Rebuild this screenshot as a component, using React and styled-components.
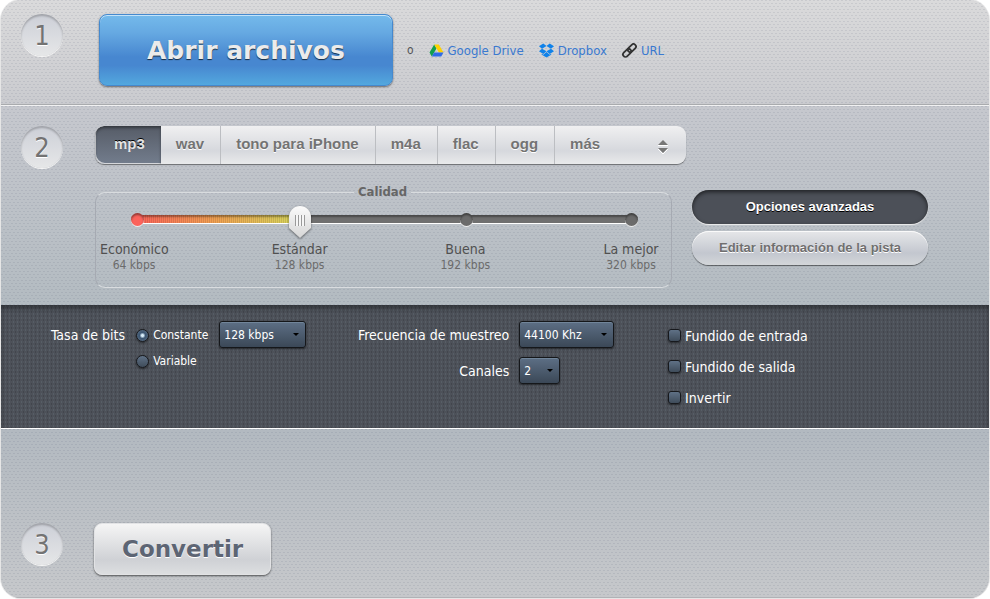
import { useState } from 'react';
import styled, { createGlobalStyle, css } from 'styled-components';

// Colors:
// ----------------------------------------------------------
// link blue: #3a79d0
// text gray: #6f6f6f
// dark panel: #4b5059
// button blue: #4787d0
// ----------------------------------------------------------

const sans = `"DejaVu Sans Condensed", "DejaVu Sans", sans-serif`;
const wide = `"DejaVu Sans", Verdana, sans-serif`;
const arial = `"Liberation Sans", Arial, sans-serif`;

const GlobalStyle = createGlobalStyle`
    * {
        box-sizing: border-box;
    }
    body {
        margin: 0;
        background: #fff;
        font-family: ${sans};
        font-size: 14px;
        color: #555;
    }
    button, input, select {
        font-family: inherit;
        margin: 0;
    }
    button, select {
        cursor: pointer;
    }
`

const Panel = styled.main`
    margin: 0 1px 1px;
    border-radius: 20px;
    overflow: hidden;
    box-shadow: 0 0 0 1px #e6e6e6;
`
// staggered 2px dashes over the metal gradient
const Section = styled.section`
    display: flex;
    align-items: flex-start;
    padding: ${p => p.$padding};
    background-color: ${p => p.$to};
    background-image:
        conic-gradient(from 270deg at 2px 1px, rgba(80, 90, 110, 0.12) 0 90deg, transparent 0),
        conic-gradient(from 270deg at 2px 1px, rgba(80, 90, 110, 0.12) 0 90deg, transparent 0),
        linear-gradient(to bottom, ${p => p.$from}, ${p => p.$to});
    background-size: 4px 6px, 4px 6px, 100% 100%;
    background-position: 0 0, 2px 3px, 0 0;
`
const OpenSection = styled(Section)`
    border-bottom: 1px solid #a9abae;
`
const FormatSection = styled(Section)`
    border-top: 1px solid #f1f1f2;
`
const ConvertSection = styled(Section)`
    border-top: 1px solid #fff;
    box-shadow: inset 0 -1px 0 #b0b2b6;
`
const StepNumber = styled.div`
    flex: none;
    width: 42px;
    height: 42px;
    border-radius: 50%;
    background: linear-gradient(#cccfd7, #e6e7e8);
    box-shadow: inset 0 2px 2px rgba(0, 0, 0, 0.22), 0 1px 0 #f4f4f4;
    color: #737373;
    font-size: 27px;
    line-height: 43px;
    text-align: center;
    text-shadow: 0 1px 0 #fff;
`

const OpenButton = styled.button`
    margin-left: 36px;
    padding: 0 47px;
    height: 72px;
    border: 1px solid #4589ce;
    border-radius: 8px;
    background: linear-gradient(#74baeb 0%, #66a9e2 25%, #4787d0 60%, #4787d0 72%, #53a8de 100%);
    box-shadow: inset 0 1px 0 #c4e3f8, 0 1px 2px rgba(0, 0, 0, 0.5);
    color: #ebebeb;
    font-family: ${wide};
    font-size: 25px;
    font-weight: bold;
    text-shadow: 0 1px 1px rgba(0, 0, 0, 0.7);
`
const Sources = styled.div`
    display: flex;
    align-items: center;
    align-self: center;
    gap: 15px;
    margin-left: 14px;
    font-size: 13px;
`
const SourceLink = styled.a`
    display: flex;
    align-items: center;
    gap: 4px;
    color: #3a79d0;
    text-decoration: none;
`
const Or = styled.span`
    font-size: 12px;
`

const FormatBody = styled.div`
    flex: 1;
    margin-left: 32px;
`
const Tabs = styled.div`
    display: inline-flex;
    height: 38px;
    border-radius: 9px;
    overflow: hidden;
    background: linear-gradient(#f0f0f1, #d6d8dd 65%, #e9eaeb);
    box-shadow: 0 1px 1px #6b6d70;
`
const tabText = css`
    border: 0;
    background: none;
    color: #737373;
    font-family: ${arial};
    font-size: 15px;
    font-weight: bold;
    line-height: 18px;
    text-shadow: 0 1px 0 #fff;
`
const Tab = styled.button`
    ${tabText}
    padding: 0 16px 3px 15px;
    border-right: 1px solid #bcbec2;
    ${p => p.$active && css`
        padding: 0 16px 3px 19px;
        border-right: 0;
        border-radius: 9px 0 0 9px;
        background: linear-gradient(#565c67, #737d8d);
        box-shadow: inset 0 2px 3px rgba(0, 0, 0, 0.4), inset 1px -1px 0 #d8dade;
        color: #e4e4e4;
        text-shadow: 0 -1px 0 #000;
    `}
`
const MoreWrap = styled.div`
    position: relative;
    width: 131px;

    svg {
        position: absolute;
        top: 13px;
        right: 17px;
        pointer-events: none;
    }
`
const MoreSelect = styled.select`
    ${tabText}
    width: 100%;
    height: 100%;
    padding: 0 15px 3px;
    appearance: none;
`

const QualityRow = styled.div`
    display: flex;
    align-items: flex-start;
    gap: 20px;
    margin-top: 20px;
`
const Quality = styled.fieldset`
    flex: none;
    width: 577px;
    margin: 0;
    padding: 5px 6px 14px 4px;
    border: 1px solid #a6aab2;
    border-top-color: #d9dcdf;
    border-bottom-color: #d9dcdf;
    border-radius: 10px;
`
const Legend = styled.legend`
    margin: 0 auto;
    padding: 0 4px;
    color: #666;
    font-size: 13px;
    font-weight: bold;
    line-height: 16px;
`
const Slider = styled.div`
    display: grid;
    align-items: center;
    width: 516px;
    height: 34px;
    margin-left: 26px;

    > * {
        grid-area: 1 / 1;
    }
`
const Rail = styled.div`
    display: flex;
    align-items: center;
    justify-content: space-between;
    height: 8px;
    margin: 0 4px 6px 5px;
    border-radius: 4px;
    box-shadow: inset 0 2px 2px rgba(0, 0, 0, 0.35), 0 1px 0 #fff;
`
const Stop = styled.span`
    width: 13px;
    height: 13px;
    border-radius: 50%;
    background: ${p => (p.$first ? '#fb635c' : '#6b6b6b')};
    box-shadow: inset 0 2px 2px rgba(0, 0, 0, 0.4), 0 1px 0 #eee;
`
const Range = styled.input`
    width: 100%;
    height: 34px;
    background: none;
    appearance: none;
    filter: drop-shadow(0 1px 1px rgba(0, 0, 0, 0.5));

    &::-webkit-slider-thumb {
        appearance: none;
        width: 22px;
        height: 32px;
        background:
            repeating-linear-gradient(90deg, #9a9a9a 0 1px, #f6f6f6 1px 3px) center 9px / 10px 11px no-repeat,
            linear-gradient(#fbfbfb, #d6d6d6);
        clip-path: path('M0 11 A11 11 0 0 1 22 11 V22 L11 32 L0 22 Z');
    }
`
const Levels = styled.div`
    display: flex;
    justify-content: space-between;
    margin-top: 2px;
`
const Level = styled.div`
    width: 68px;
    color: #505050;
    font-size: 14px;
    line-height: 16px;
    text-align: center;
    white-space: nowrap;

    small {
        display: block;
        color: #6b6b6b;
        font-size: 12px;
    }
`
const SideButtons = styled.div`
    display: flex;
    flex-direction: column;
    gap: 7px;
    width: 236px;
    margin-top: 6px;
`
const PillButton = styled.button`
    height: 34px;
    padding-bottom: 2px;
    border: 0;
    border-radius: 17px;
    background: linear-gradient(#e6e7e9, #c3c7cf 65%, #d3d6d9);
    box-shadow: inset 0 1px 0 #fafafa, 0 1px 1px rgba(0, 0, 0, 0.5);
    color: #6f6f6f;
    font-family: ${arial};
    font-size: 13px;
    font-weight: bold;
    text-shadow: 0 1px 0 #fff;
    ${p => p.$active && css`
        background: #4c5058;
        box-shadow: inset 0 2px 4px rgba(0, 0, 0, 0.6), 0 1px 1px #eee;
        color: #fff;
        text-shadow: 0 1px 0 #000;
    `}
`

const Advanced = styled.section`
    display: grid;
    grid-template-columns: 307fr 310fr 321fr;
    padding: 16px 0 18px 50px;
    background-color: #4d5159;
    background-image:
        conic-gradient(from 270deg at 1px 2px, rgba(120, 140, 150, 0.22) 0 90deg, transparent 0),
        conic-gradient(from 270deg at 1px 2px, rgba(20, 25, 30, 0.2) 0 90deg, transparent 0);
    background-size: 4px 4px, 4px 4px;
    background-position: 0 0, 2px 2px;
    box-shadow: inset 0 4px 6px -2px rgba(0, 0, 0, 0.5);
    color: #fff;
`
const BitrateGroup = styled.div`
    display: flex;
    align-items: flex-start;
    gap: 11px;
`
const Caption = styled.label`
    line-height: 29px;
    white-space: nowrap;
`
const RadioList = styled.div`
    display: flex;
    flex-direction: column;
`
const RadioLabel = styled.label`
    display: flex;
    align-items: center;
    gap: 4px;
    height: 26px;
    padding-top: 2px;
    font-size: 12px;
`
const tick = css`
    appearance: none;
    flex: none;
    width: 13px;
    height: 13px;
    border: 1px solid #17191d;
    background: linear-gradient(#5f7186, #3f4c5a);
    box-shadow: 0 1px 2px rgba(0, 0, 0, 0.5);
`
const Radio = styled.input`
    ${tick}
    border-radius: 50%;

    &:checked {
        background: radial-gradient(circle, #d7ecf8 0 1px, #3b5572 3px, #55697e 6px);
    }
`
const Checkbox = styled.input`
    ${tick}
    border-radius: 3px;

    &:checked {
        background: #a8cbe4;
    }
`
const SelectWrap = styled.div`
    position: relative;
    width: ${p => p.$width};

    &::after {
        content: '';
        position: absolute;
        top: 12px;
        right: 7px;
        border: 3px solid transparent;
        border-top-color: #000;
        pointer-events: none;
    }
`
const Select = styled.select`
    width: 100%;
    height: 27px;
    padding: 0 4px;
    appearance: none;
    border: 1px solid #15171a;
    border-radius: 3px;
    background: linear-gradient(#5d6f85, #3b4857);
    box-shadow: inset 0 1px 0 #71859a, 0 1px 2px rgba(0, 0, 0, 0.5);
    color: #fff;
    font-size: 12px;
`
const FieldGrid = styled.div`
    display: grid;
    grid-template-columns: max-content max-content;
    align-content: start;
    column-gap: 10px;
    row-gap: 7px;

    ${Caption} {
        text-align: right;
    }
`
const CheckList = styled.div`
    display: flex;
    flex-direction: column;
    gap: 4px;
`
const CheckLabel = styled.label`
    display: flex;
    align-items: center;
    gap: 4px;
    height: 27px;
    padding-top: 2px;
`

const ConvertButton = styled.button`
    margin-left: 31px;
    padding: 0 27px;
    height: 52px;
    border: 1px solid #e2e3e5;
    border-radius: 8px;
    background: linear-gradient(#f5f5f5, #cfd1d5 72%, #dcdee0);
    box-shadow: 0 1px 2px rgba(0, 0, 0, 0.6);
    color: #5d6574;
    font-family: ${wide};
    font-size: 23px;
    font-weight: bold;
    text-shadow: 0 1px 0 #fff;
`

const FORMATS = ['mp3', 'wav', 'tono para iPhone', 'm4a', 'flac', 'ogg'];
const LEVELS = [
    { name: 'Económico', rate: '64 kbps', at: 0 },
    { name: 'Estándar', rate: '128 kbps', at: 33 },
    { name: 'Buena', rate: '192 kbps', at: 67 },
    { name: 'La mejor', rate: '320 kbps', at: 100 },
];
const EFFECTS = ['Fundido de entrada', 'Fundido de salida', 'Invertir'];

const DriveIcon = () => (
    <svg width="15" height="13" viewBox="0 0 14 13" aria-hidden="true">
        <path d="M4.7 0.5 L0 8.6 L2.3 12.5 L7 4.4 Z" fill="#11a04f" />
        <path d="M4.7 0.5 H9.3 L14 8.6 H9.4 Z" fill="#fdd100" />
        <path d="M4.6 8.6 H14 L11.7 12.5 H2.3 Z" fill="#2f6be6" />
    </svg>
);

const DropboxIcon = () => (
    <svg width="15" height="15" viewBox="0 0 16 15" fill="#0f82ea" aria-hidden="true">
        <path d="M4.6 0 L0 3 L3.2 5.6 L8 2.8 Z" />
        <path d="M11.4 0 L16 3 L12.8 5.6 L8 2.8 Z" />
        <path d="M0 8.2 L3.2 5.6 L8 8.4 L4.6 11.2 Z" />
        <path d="M16 8.2 L12.8 5.6 L8 8.4 L11.4 11.2 Z" />
        <path d="M8 9.1 L4.6 12 L3 11 V12.1 L8 15 L13 12.1 V11 L11.4 12 Z" />
    </svg>
);

const ChainIcon = () => (
    <svg width="15" height="15" viewBox="0 0 15 15" fill="none" stroke="#333" strokeWidth="1.8" aria-hidden="true">
        <g transform="rotate(-45 7.5 7.5)">
            <rect x="-0.6" y="5" width="9.4" height="5" rx="2.5" />
            <rect x="6.2" y="5" width="9.4" height="5" rx="2.5" />
        </g>
    </svg>
);

const UpDownIcon = () => (
    <svg width="12" height="15" viewBox="0 0 12 15" aria-hidden="true">
        <path d="M1 6.5 H11 M1 10 L6 15 L11 10" stroke="#fff" fill="none" />
        <path d="M1 6 L6 1 L11 6 Z" fill="#777" />
        <path d="M1 9 L6 14 L11 9 Z" fill="#777" />
    </svg>
);

function QualitySlider() {
    const [value, setValue] = useState(33);
    const stripes = `repeating-linear-gradient(90deg, rgba(0,0,0,0.1) 0 1px, transparent 1px 2px) 0 0 / ${value}% 100% no-repeat`;
    const fill = `linear-gradient(90deg, #fb5f5a, #f0a052 ${value / 2}%, #d6d65c ${value}%, #6f6f6f ${value}%)`;

    return (
        <Quality>
            <Legend>Calidad</Legend>
            <Slider>
                <Rail style={{ background: `${stripes}, ${fill}` }}>
                    {LEVELS.map(level => <Stop key={level.name} $first={level.at === 0} />)}
                </Rail>
                <Range
                    type="range"
                    min="0"
                    max="100"
                    value={value}
                    aria-label="Calidad"
                    onChange={e => setValue(Number(e.target.value))}
                />
            </Slider>
            <Levels>
                {LEVELS.map(level => (
                    <Level key={level.name}>
                        {level.name}
                        <small>{level.rate}</small>
                    </Level>
                ))}
            </Levels>
        </Quality>
    );
}

export default function App() {
    const [format, setFormat] = useState('mp3');
    const [advanced, setAdvanced] = useState(true);

    return (
        <Panel>
            <GlobalStyle />
            <OpenSection $from="#dadadb" $to="#cacbcf" $padding="14px 20px 18px">
                <StepNumber>1</StepNumber>
                <OpenButton type="button">Abrir archivos</OpenButton>
                <Sources>
                    <Or>o</Or>
                    <SourceLink href="#drive"><DriveIcon />Google Drive</SourceLink>
                    <SourceLink href="#dropbox"><DropboxIcon />Dropbox</SourceLink>
                    <SourceLink href="#url"><ChainIcon />URL</SourceLink>
                </Sources>
            </OpenSection>

            <FormatSection $from="#c6c8ce" $to="#b3bbc1" $padding="20px 20px 17px">
                <StepNumber>2</StepNumber>
                <FormatBody>
                    <Tabs>
                        {FORMATS.map(name => (
                            <Tab
                                key={name}
                                type="button"
                                $active={name === format}
                                aria-pressed={name === format}
                                onClick={() => setFormat(name)}
                            >
                                {name}
                            </Tab>
                        ))}
                        <MoreWrap>
                            <MoreSelect aria-label="más formatos">
                                <option>más</option>
                            </MoreSelect>
                            <UpDownIcon />
                        </MoreWrap>
                    </Tabs>
                    <QualityRow>
                        <QualitySlider />
                        <SideButtons>
                            <PillButton type="button" $active={advanced} onClick={() => setAdvanced(!advanced)}>
                                Opciones avanzadas
                            </PillButton>
                            <PillButton type="button">Editar información de la pista</PillButton>
                        </SideButtons>
                    </QualityRow>
                </FormatBody>
            </FormatSection>

            {advanced && (
                <Advanced>
                    <BitrateGroup>
                        <Caption htmlFor="bitrate">Tasa de bits</Caption>
                        <RadioList>
                            <RadioLabel><Radio type="radio" name="mode" defaultChecked />Constante</RadioLabel>
                            <RadioLabel><Radio type="radio" name="mode" />Variable</RadioLabel>
                        </RadioList>
                        <SelectWrap $width="87px">
                            <Select id="bitrate"><option>128 kbps</option></Select>
                        </SelectWrap>
                    </BitrateGroup>
                    <FieldGrid>
                        <Caption htmlFor="rate">Frecuencia de muestreo</Caption>
                        <SelectWrap $width="95px">
                            <Select id="rate"><option>44100 Khz</option></Select>
                        </SelectWrap>
                        <Caption htmlFor="channels">Canales</Caption>
                        <SelectWrap $width="41px">
                            <Select id="channels"><option>2</option></Select>
                        </SelectWrap>
                    </FieldGrid>
                    <CheckList>
                        {EFFECTS.map(name => (
                            <CheckLabel key={name}><Checkbox type="checkbox" />{name}</CheckLabel>
                        ))}
                    </CheckList>
                </Advanced>
            )}

            <ConvertSection $from="#b2b9c0" $to="#c6c8cb" $padding="94px 20px 23px">
                <StepNumber>3</StepNumber>
                <ConvertButton type="button">Convertir</ConvertButton>
            </ConvertSection>
        </Panel>
    );
}
